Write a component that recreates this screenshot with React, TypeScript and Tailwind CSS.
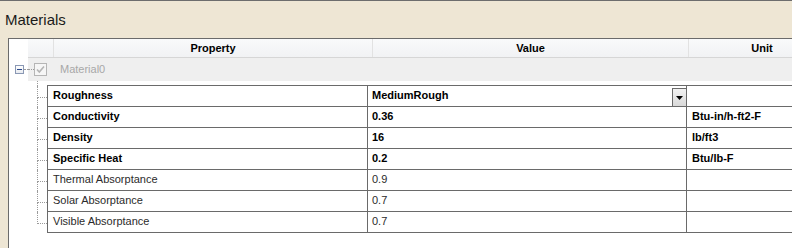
import React from "react";

type Row = { p: string; v: string; u: string; b: boolean; dd?: boolean };

const rows: Row[] = [
  { p: "Roughness", v: "MediumRough", u: "", b: true, dd: true },
  { p: "Conductivity", v: "0.36", u: "Btu-in/h-ft2-F", b: true },
  { p: "Density", v: "16", u: "lb/ft3", b: true },
  { p: "Specific Heat", v: "0.2", u: "Btu/lb-F", b: true },
  { p: "Thermal Absorptance", v: "0.9", u: "", b: false },
  { p: "Solar Absorptance", v: "0.7", u: "", b: false },
  { p: "Visible Absorptance", v: "0.7", u: "", b: false },
];

function Stub({ last }: { last: boolean }) {
  return (
    <div className="w-[38px] shrink-0 flex">
      <div className="ml-[28px] w-[10px] flex flex-col">
        <div className="h-[12px] border-l border-b border-dotted border-[#9a9a9a]" />
        <div className={last ? "flex-1" : "flex-1 border-l border-dotted border-[#9a9a9a]"} />
      </div>
    </div>
  );
}

export default function App() {
  return (
    <div className="w-[792px] h-[248px] overflow-hidden bg-[#EEE6D4] border-t border-[#6d6d6d] flex flex-col font-['Liberation_Sans',Arial,sans-serif]">
      <div className="h-[37px] shrink-0 pl-[5px] pt-[10px] text-[15px] leading-[18px] text-[#1a1a1a]">Materials</div>
      <div className="ml-[8px] w-[900px] flex-1 bg-white border-l border-t border-[#6b6b6b] flex flex-col">
        {/* header */}
        <div className="flex h-[19px] shrink-0">
          <div className="w-[19px] shrink-0" />
          <div className="flex flex-1 bg-gradient-to-b from-[#f9fafb] to-[#f1f2f4] border-b border-[#d6d6d6] text-[11px] font-bold text-black leading-[18px]">
            <div className="w-[26px] shrink-0 border-r border-[#e2e2e2]" />
            <div className="w-[319px] shrink-0 border-r border-[#e2e2e2] text-center">Property</div>
            <div className="w-[316px] shrink-0 border-r border-[#e2e2e2] text-center">Value</div>
            <div className="w-[146px] shrink-0 text-center">Unit</div>
          </div>
        </div>
        {/* Material0 row */}
        <div className="flex h-[23px] shrink-0">
          <div className="w-[19px] shrink-0 flex items-center">
            <div className="ml-[6px] w-[9px] h-[9px] border border-[#8a98b4] bg-gradient-to-b from-white to-[#e8ebf0] flex items-center justify-center">
              <div className="w-[5px] h-[1px] bg-[#2c4a8c]" />
            </div>
            <div className="w-[4px] h-[12px] border-b border-dotted border-[#9a9a9a] self-start" />
          </div>
          <div className="flex-1 bg-[#efefef] flex items-center">
            <div className="w-[6px] h-[12px] border-b border-dotted border-[#9a9a9a] self-start" />
            <div className="w-[13px] h-[13px] border border-[#b5b5b5] bg-[#f6f6f6] flex items-center justify-center">
              <svg width="11" height="11" viewBox="0 0 11 11">
                <path d="M2 5.5 L4.3 8 L9 2.5" stroke="#b4b4b4" strokeWidth="1.6" fill="none" />
              </svg>
            </div>
            <div className="ml-[13px] text-[11px] text-[#a8a8a8] leading-[14px] -mt-[1px]">Material0</div>
          </div>
        </div>
        {/* gap row with dotted line + grid top border */}
        <div className="flex h-[5px] shrink-0">
          <div className="w-[38px] shrink-0 flex">
            <div className="ml-[28px] border-l border-dotted border-[#9a9a9a]" />
          </div>
          <div className="flex-1 border-b border-[#6a6a6a]" />
        </div>
        {rows.map((r, i) => (
          <div key={r.p} className="flex h-[21px] shrink-0">
            <Stub last={i === rows.length - 1} />
            <div className={`flex flex-1 border-l border-b border-[#6a6a6a] text-[11px] leading-[19px] ${r.b ? "font-bold text-black" : "text-[#2b2b2b]"}`}>
              <div className="w-[320px] shrink-0 border-r border-[#6a6a6a] pl-[5px]">{r.p}</div>
              <div className="w-[319px] shrink-0 border-r border-[#6a6a6a] pl-[4px] flex justify-between">
                <span>{r.v}</span>
                {r.dd && (
                  <div className="w-[14px] h-[18px] mt-[2px] border-l border-t border-[#6a6a6a] bg-gradient-to-b from-[#f2f2f2] to-[#d9d9d9] flex items-center justify-center">
                    <svg width="7" height="4" viewBox="0 0 7 4">
                      <path d="M0 0 H7 L3.5 4 Z" fill="#000" />
                    </svg>
                  </div>
                )}
              </div>
              <div className="flex-1 pl-[5px]">{r.u}</div>
            </div>
          </div>
        ))}
      </div>
    </div>
  );
}
